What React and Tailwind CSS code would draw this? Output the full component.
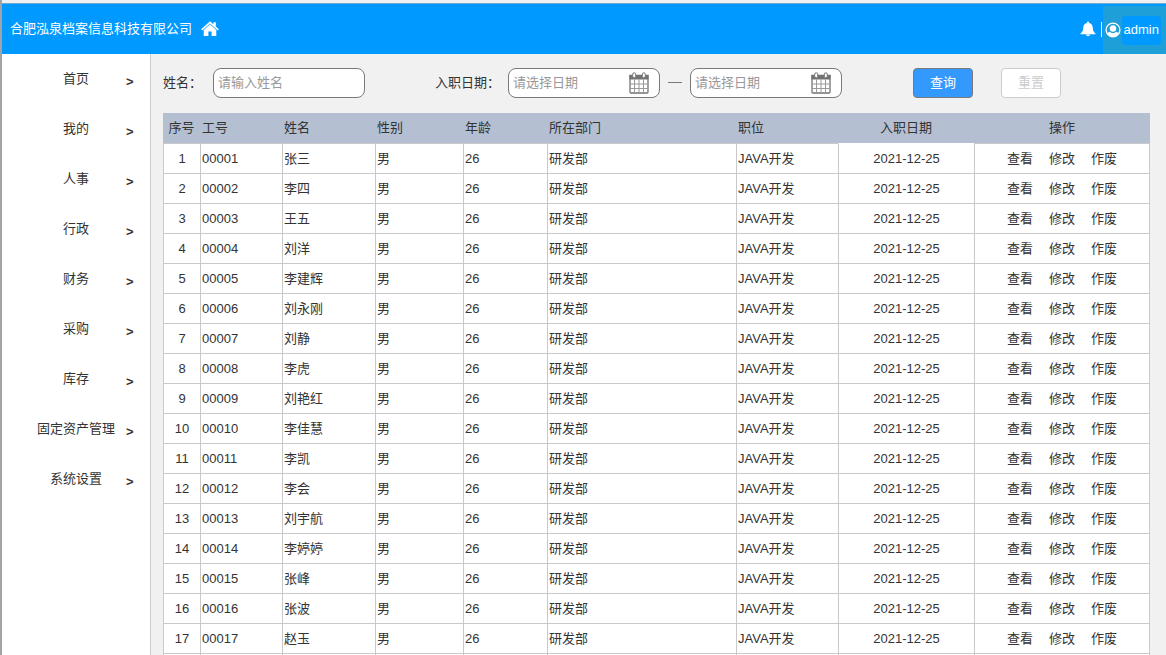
import React from "react";

const MENU = ["首页", "我的", "人事", "行政", "财务", "采购", "库存", "固定资产管理", "系统设置"];

const NAMES = [
  "张三", "李四", "王五", "刘洋", "李建辉", "刘永刚", "刘静", "李虎", "刘艳红",
  "李佳慧", "李凯", "李会", "刘宇航", "李婷婷", "张峰", "张波", "赵玉",
];

const COLUMNS = [
  { label: "序号", width: "w-[37px]", head: "text-center" },
  { label: "工号", width: "w-[82px]", head: "text-left pl-[2px]" },
  { label: "姓名", width: "w-[93px]", head: "text-left pl-[2px]" },
  { label: "性别", width: "w-[88px]", head: "text-left pl-[2px]" },
  { label: "年龄", width: "w-[84px]", head: "text-left pl-[2px]" },
  { label: "所在部门", width: "w-[189px]", head: "text-left pl-[2px]" },
  { label: "职位", width: "w-[102px]", head: "text-left pl-[2px]" },
  { label: "入职日期", width: "w-[136px]", head: "text-center" },
  { label: "操作", width: "w-[176px]", head: "text-center" },
];

function HomeIcon() {
  return (
    <svg viewBox="0 0 18 16" className="h-4 w-[18px] shrink-0 fill-white" aria-hidden="true">
      <path d="M9 0.2 L12.4 3.3 V1.2 H14.8 V5.5 L17.8 8.3 L16.8 9.4 L9 2.4 L1.2 9.4 L0.200 8.300 Z" />
      <path d="M9 3.3 L15.3 9 V15 H10.6 V10.6 H7.4 V15 H2.7 V9 Z" />
    </svg>
  );
}

function BellIcon() {
  return (
    <svg viewBox="0 0 16 16" className="h-4 w-4 fill-white" aria-hidden="true">
      <path d="M8 0.4 a1 1 0 0 1 1 1 v0.5 c2.5 0.5 3.7 2.4 3.8 4.8 c0.1 3 1 4.4 2.7 5.7 v0.8 H0.5 v-0.8 c1.7 -1.3 2.6 -2.7 2.7 -5.7 c0.1 -2.4 1.3 -4.3 3.8 -4.8 v-0.5 a1 1 0 0 1 1 -1 z" />
      <path d="M6 13.6 h4 a2 1.6 0 0 1 -4 0 z" />
    </svg>
  );
}

function UserIcon() {
  return (
    <svg viewBox="0 0 16 16" className="h-4 w-4 shrink-0" aria-hidden="true">
      <circle cx="8" cy="8" r="6.9" fill="none" stroke="white" strokeWidth="1.3" />
      <circle cx="8" cy="6.5" r="3.2" fill="white" />
      <path d="M2.4 12 C2.9 10.6 3.7 10 4.6 9.7 C6.6 11.6 9.4 11.6 11.4 9.7 C12.3 10 13.1 10.6 13.6 12 A7 7 0 0 1 2.4 12 Z" fill="white" />
    </svg>
  );
}

function CalendarIcon() {
  return (
    <svg viewBox="0 0 20 22" className="h-[22px] w-5" aria-hidden="true">
      <path d="M1 3.5 H19 V20 a1 1 0 0 1 -1 1 H2 a1 1 0 0 1 -1 -1 Z" fill="white" stroke="#737373" strokeWidth="1.3" />
      <path d="M0.5 3 H19.5 V7.5 H0.5 Z" fill="#737373" />
      <path d="M5.5 7.5 V21 M10 7.5 V21 M14.5 7.5 V21 M1 12 H19 M1 16.5 H19" stroke="#999999" strokeWidth="1" />
      <rect x="3.7" y="0.8" width="3" height="5" rx="1.4" fill="white" stroke="#737373" strokeWidth="1" />
      <rect x="13.3" y="0.8" width="3" height="5" rx="1.4" fill="white" stroke="#737373" strokeWidth="1" />
    </svg>
  );
}

function DateField({ id, label }) {
  return (
    <div className="flex h-[30px] w-[152px] items-center rounded-lg border border-[#797979] bg-white pr-[10px] pl-1">
      <input
        id={id}
        type="text"
        aria-label={label}
        placeholder="请选择日期"
        className="h-full min-w-0 flex-1 bg-transparent pb-px outline-none placeholder:text-[#999999]"
      />
      <CalendarIcon />
    </div>
  );
}

export default function App() {
  return (
    <div className="flex h-screen flex-col overflow-hidden border-l-2 border-[#a0a4a8] bg-[#f1f1f1] pt-[3px] font-['Liberation_Sans','Noto_Sans_CJK_SC',sans-serif] text-[13px] leading-5 text-[#333333]">
      <header className="flex h-[51px] shrink-0 items-stretch border-t border-[#6fa8d0] bg-[#0099ff] text-white">
        <div className="flex flex-1 items-center gap-[9px] pl-2">
          <span>合肥泓泉档案信息科技有限公司</span>
          <a href="#home" aria-label="首页">
            <HomeIcon />
          </a>
        </div>
        <div className="flex items-center gap-[5px] pr-px">
          <button type="button" aria-label="通知">
            <BellIcon />
          </button>
          <span className="h-[15px] w-px bg-white" />
        </div>
        <button type="button" className="mt-[2px] flex items-center bg-[#1e9fd8] pr-[5px] pl-[2px]">
          <UserIcon />
          <span className="ml-px flex h-[29px] items-center rounded-sm bg-[#0099ff] px-[2px]">admin</span>
        </button>
      </header>

      <div className="flex min-h-0 flex-1">
        <nav className="w-[149px] shrink-0 border-r border-[#cccccc] bg-white">
          <ul>
            {MENU.map((item) => (
              <li key={item}>
                <a href="#menu" className="grid h-[50px] grid-cols-[1fr_84px_1fr] items-center">
                  <span className="col-start-2 text-center whitespace-nowrap">{item}</span>
                  <span className="pt-[6px] pl-2 font-bold">&gt;</span>
                </a>
              </li>
            ))}
          </ul>
        </nav>

        <main className="min-w-0 flex-1 pr-4 pl-3">
          <form className="flex h-[59px] items-center pb-[2px]" onSubmit={(e) => e.preventDefault()}>
            <label htmlFor="name" className="w-[50px] shrink-0">姓名：</label>
            <input
              id="name"
              type="text"
              placeholder="请输入姓名"
              className="h-[30px] w-[152px] rounded-lg border border-[#797979] bg-white px-1 pb-px outline-none placeholder:text-[#999999]"
            />
            <label htmlFor="start" className="ml-[70px] w-[73px] shrink-0">入职日期：</label>
            <DateField id="start" label="开始日期" />
            <span className="mx-2 h-px w-[14px] bg-[#797979]" />
            <DateField id="end" label="结束日期" />
            <button type="submit" className="ml-[71px] h-[30px] w-[60px] rounded-[4px] border border-[#797979] bg-[#3399ff] text-white">
              查询
            </button>
            <button type="reset" className="ml-7 h-[30px] w-[60px] rounded-[4px] border border-[#cccccc] bg-white text-[#cccccc]">
              重置
            </button>
          </form>

          <table className="w-full table-fixed border-separate border-spacing-0">
            <thead>
              <tr className="h-[30px] bg-[#b4bfd2]">
                {COLUMNS.map((c) => (
                  <th key={c.label} scope="col" className={`${c.width} ${c.head} p-0 font-normal whitespace-nowrap`}>
                    {c.label}
                  </th>
                ))}
              </tr>
            </thead>
            <tbody className="bg-white [&_td]:border-t [&_td]:border-l [&_td]:border-[#c9c9c9] [&_td]:p-0 [&_td]:whitespace-nowrap [&_td:last-child]:border-r [&_tr:first-child_td:nth-child(8)]:border-t-white">
              {NAMES.map((name, i) => (
                <tr key={name} className="h-[30px]">
                  <td className="text-center">{i + 1}</td>
                  <td><span className="pl-px">{String(i + 1).padStart(5, "0")}</span></td>
                  <td><span className="pl-px">{name}</span></td>
                  <td><span className="pl-px">男</span></td>
                  <td><span className="pl-px">26</span></td>
                  <td><span className="pl-px">研发部</span></td>
                  <td><span className="pl-px">JAVA开发</span></td>
                  <td className="text-center">2021-12-25</td>
                  <td>
                    <div className="flex justify-center gap-4">
                      <a href="#view">查看</a>
                      <a href="#edit">修改</a>
                      <a href="#void">作废</a>
                    </div>
                  </td>
                </tr>
              ))}
              <tr className="h-[30px]">
                {COLUMNS.map((c) => (
                  <td key={c.label} />
                ))}
              </tr>
            </tbody>
          </table>
        </main>
      </div>
    </div>
  );
}
